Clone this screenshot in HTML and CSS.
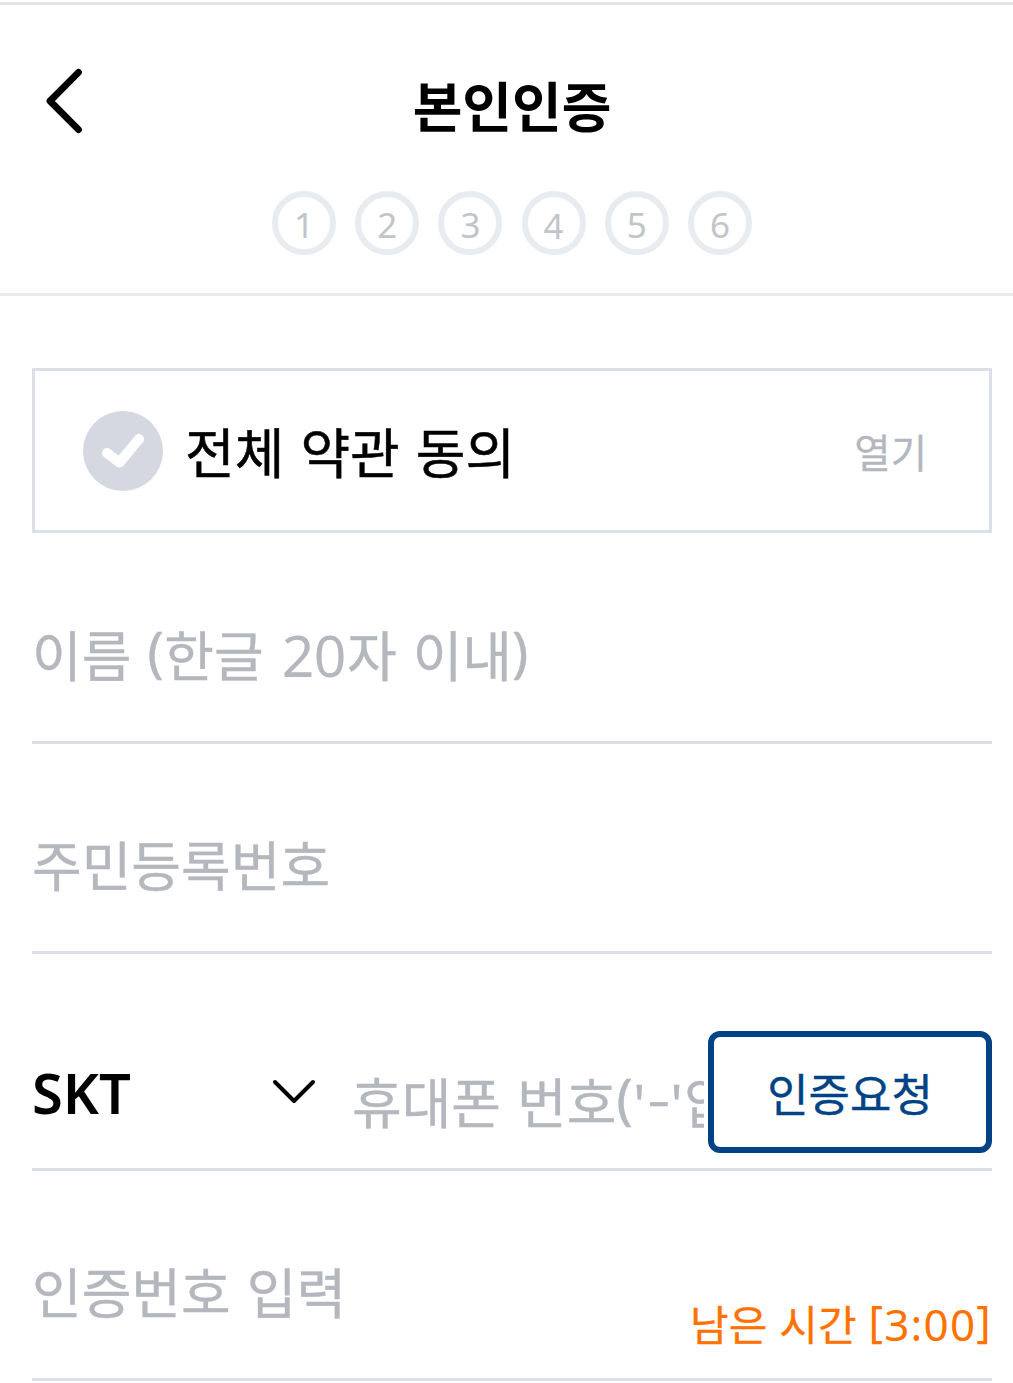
FILE: index.html
```html
<!DOCTYPE html>
<html lang="ko">
<head>
<meta charset="utf-8">
<title>본인인증</title>
<link rel="stylesheet" href="styles.css">
</head>
<body>
<header class="header">
  <div class="title-bar">
    <button class="back" aria-label="이전">
      <svg width="38" height="66" viewBox="0 0 38 66"><path d="M33.5 4.3 5 33 33.5 61.7" fill="none" stroke="#000" stroke-width="6.8" stroke-linecap="round" stroke-linejoin="round"/></svg>
    </button>
    <h1 class="title">본인인증</h1>
  </div>
  <ol class="steps">
    <li class="step">1</li><li class="step">2</li><li class="step">3</li><li class="step step-low">4</li><li class="step">5</li><li class="step">6</li>
  </ol>
</header>
<main class="form">
  <section class="terms">
    <svg class="check" width="80" height="80" viewBox="0 0 80 80"><circle cx="40" cy="40" r="40" fill="#d5d8e0"/><path d="M24 42 36.5 51.5 56 28" fill="none" stroke="#fff" stroke-width="10" stroke-linecap="round" stroke-linejoin="round"/></svg>
    <span class="terms-label">전체 약관 동의</span>
    <span class="terms-open">열기</span>
  </section>
  <div class="field field-name"><span class="placeholder">이름 <span class="paren">(</span>한글 <span class="digits">20</span>자 이내<span class="paren">)</span></span></div>
  <div class="field field-id"><span class="placeholder">주민등록번호</span></div>
  <div class="field field-phone">
    <span class="carrier">SKT</span>
    <svg class="chevron" width="44" height="26" viewBox="0 0 44 26"><path d="M3 3 22 22 41 3" fill="none" stroke="#000" stroke-width="4" stroke-linecap="round" stroke-linejoin="round"/></svg>
    <span class="phone placeholder">휴대폰 번호<span class="paren">(</span><span class="quoted">'<span class="dash">-</span>'</span>없이)</span>
    <button class="request">인증요청</button>
  </div>
  <div class="field field-code">
    <span class="placeholder">인증번호 입력</span>
    <span class="timer">남은 시간 <span class="time"><span class="bracket">[</span>3:00<span class="bracket">]</span></span></span>
  </div>
</main>
</body>
</html>
```
FILE: styles.css
```css
* { box-sizing: border-box; }
body {
  margin: 0;
  background: #fff;
  color: #000;
  font-family: "Noto Sans", "Noto Sans CJK KR", sans-serif;
  overflow: hidden;
}
button { padding: 0; background: none; border: 0; font: inherit; }
.header {
  margin-top: 2px;
  height: 294px;
  border-top: 3px solid #e5e5e5;
  border-bottom: 3px solid #e7eaee;
}
.title-bar {
  display: grid;
  grid-template-columns: 84px 1fr 84px;
  padding-top: 62px;
  height: 186px;
}
.back { display: block; width: 38px; height: 66px; margin: 1px 0 0 45px; }
.back svg { display: block; }
.title {
  margin: 0;
  padding-left: 11px;
  font-size: 54px;
  line-height: 80px;
  font-weight: 700;
  text-align: center;
}
.steps {
  display: flex;
  justify-content: center;
  gap: 19.2px;
  margin: 0;
  padding: 0 0 0 11px;
  list-style: none;
}
.step {
  width: 64px;
  height: 64px;
  border: 6px solid #e8ebf0;
  border-radius: 50%;
  color: #c1c4c9;
  font-size: 35px;
  line-height: 55px;
  text-align: center;
}
.step-low { line-height: 58px; }
.form { padding: 72px 21px 0 32px; }
.terms {
  display: flex;
  align-items: center;
  height: 165px;
  padding: 0 62px 0 48px;
  border: 3px solid #dcdfe7;
}
.terms-label {
  margin-left: 22px;
  padding-top: 5px;
  font-size: 54px;
  line-height: 80px;
  word-spacing: 2px;
  -webkit-text-stroke: 0.5px currentColor;
}
.terms-open {
  margin-left: auto;
  padding-top: 5px;
  color: #b4b7be;
  font-size: 39.5px;
  line-height: 60px;
  -webkit-text-stroke: 0.3px currentColor;
}
.field {
  display: flex;
  border-bottom: 3px solid #dcdfe5;
}
.placeholder {
  color: #b4b7be;
  font-size: 54px;
  line-height: 80px;
  white-space: pre;
  word-spacing: 2px;
  -webkit-text-stroke: 0.4px currentColor;
}
.paren { line-height: 0; vertical-align: 6px; letter-spacing: 0.7px; }
.digits {
  font-size: 57px;
  line-height: 0;
  letter-spacing: -0.5px;
  margin: 0 1px 0 2px;
  -webkit-text-stroke: 0;
}
.quoted { letter-spacing: 1.7px; }
.dash { font-size: 72px; font-weight: 300; line-height: 0; letter-spacing: 0; }
.field-name { height: 211px; padding-top: 83px; }
.field-id { height: 210px; padding-top: 82px; }
.field-phone { height: 217px; padding-top: 77px; }
.carrier {
  width: 240px;
  font-size: 56px;
  line-height: 122px;
  font-weight: 600;
}
.chevron { margin-top: 48px; }
.phone { width: 352px; margin: 32px 4px 0 36px; overflow: hidden; }
.request {
  width: 284px;
  height: 122px;
  padding-top: 5px;
  border: 6px solid #004385;
  border-radius: 12px;
  color: #004385;
  font-size: 45px;
  line-height: 105px;
  -webkit-text-stroke: 0.4px currentColor;
}
.field-code { justify-content: space-between; height: 210px; padding-top: 82px; }
.timer {
  padding-top: 42px;
  color: #ff7200;
  font-size: 42px;
  line-height: 60px;
  word-spacing: 1px;
  -webkit-text-stroke: 0.3px currentColor;
}
.time {
  font-size: 44px;
  line-height: 0;
  letter-spacing: 1.2px;
  -webkit-text-stroke: 0;
}
.bracket { vertical-align: 4px; }
```
